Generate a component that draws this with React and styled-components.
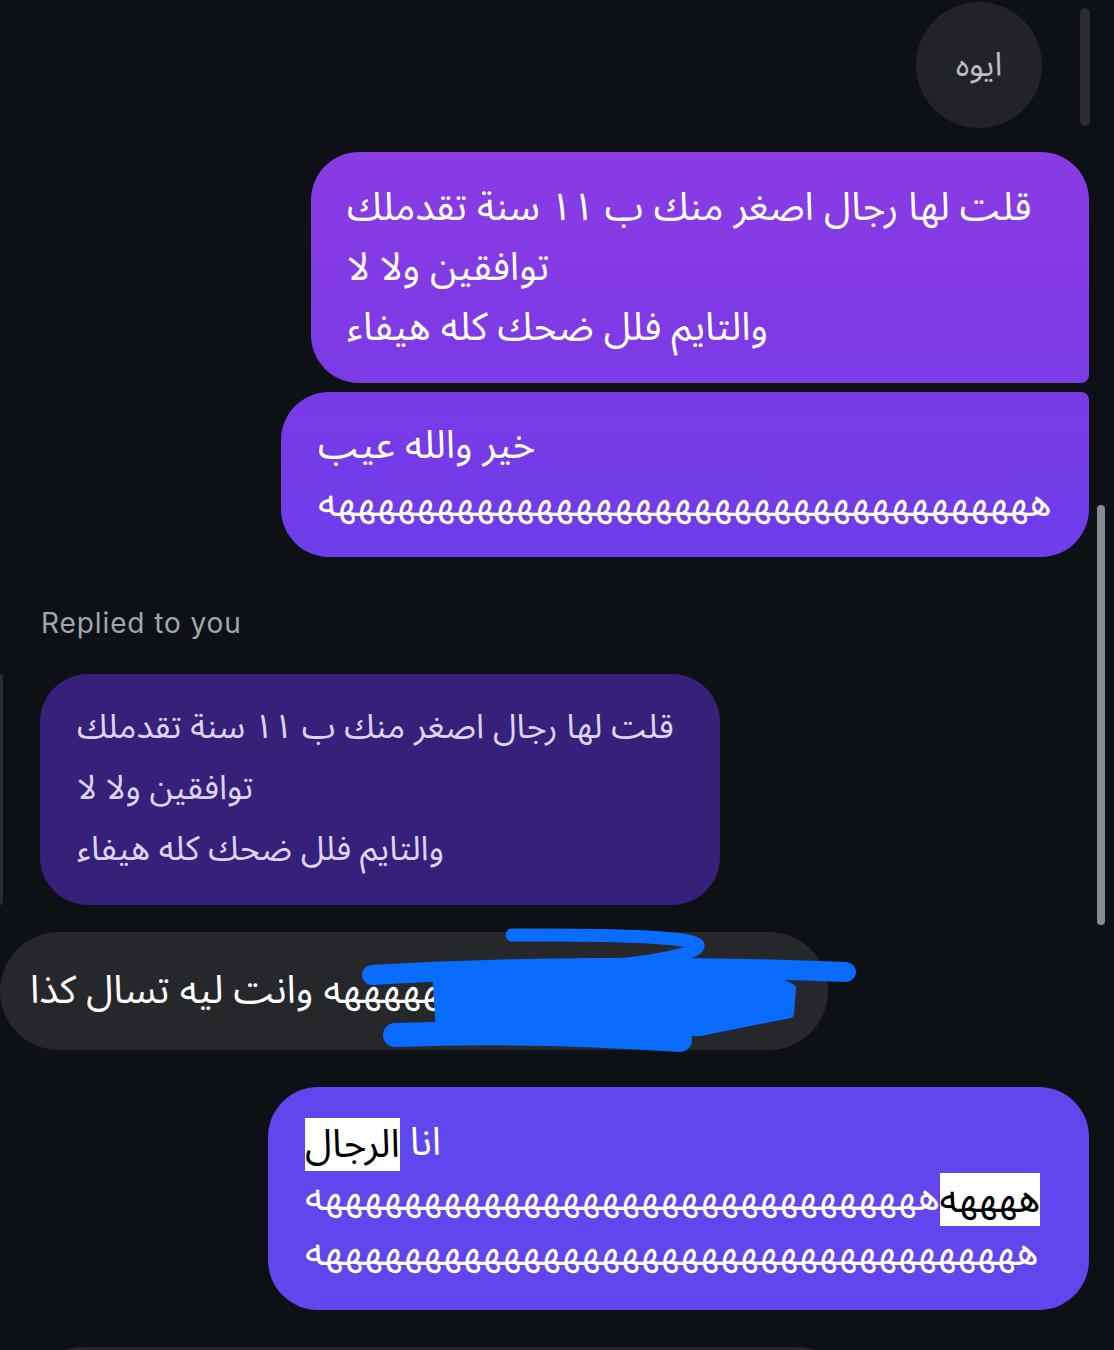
import React from "react";
import styled, { createGlobalStyle } from "styled-components";

const GlobalStyle = createGlobalStyle`
  body {
    margin: 0;
    background: #0d1014;
  }
`;

const arabic = `"Noto Sans Arabic", "DejaVu Sans", sans-serif`;

const Screen = styled.main`
  position: relative;
  width: 1114px;
  height: 1350px;
  overflow: hidden;
  background: #0d1014;
  display: flex;
  flex-direction: column;
  font-family: ${arabic};
`;

const Row = styled.div`
  position: relative;
  display: flex;
  justify-content: ${(p) => (p.$mine ? "flex-end" : "flex-start")};
  margin-top: ${(p) => p.$top || 0}px;
  padding-right: ${(p) => p.$right || 0}px;
  padding-left: ${(p) => p.$left || 0}px;
`;

const Reaction = styled.div`
  width: 126px;
  height: 126px;
  border-radius: 50%;
  background: #212327;
  color: #bcbcc0;
  font-size: 33px;
  display: flex;
  align-items: center;
  justify-content: center;
`;

const Bubble = styled.div`
  box-sizing: border-box;
  width: ${(p) => p.$width}px;
  padding: ${(p) => p.$pad};
  border-radius: ${(p) => p.$radius};
  background: ${(p) => p.$bg};
  color: #fff;
  font-size: ${(p) => p.$size || 39}px;
  line-height: ${(p) => p.$lh || 60}px;
  text-align: left;
  white-space: nowrap;
`;

const Line = styled.div`
  unicode-bidi: plaintext;
  text-align: left;
`;

const Mark = styled.span`
  display: inline-block;
  height: 53px;
  line-height: 53px;
  vertical-align: middle;
  background: #fff;
  color: #000;
`;

const Label = styled.div`
  margin-top: 51px;
  padding-left: 41px;
  font-family: Inter, "Liberation Sans", sans-serif;
  font-size: 28px;
  letter-spacing: 0.9px;
  line-height: 30px;
  color: #a2a6aa;
`;

const ReplyBar = styled.div`
  width: 3px;
  margin-right: 37px;
  border-radius: 0 3px 3px 0;
  background: #2a2c30;
`;

const ReplyBubble = styled(Bubble)`
  color: #ddd3f4;
`;

const GrayBubble = styled.div`
  box-sizing: border-box;
  width: ${(p) => p.$width}px;
  height: ${(p) => p.$height}px;
  border-radius: 59px;
  background: #25272b;
  color: #fff;
  font-size: 39px;
  line-height: 118px;
  padding: 0 38px 0 30px;
  white-space: nowrap;
  overflow: hidden;
  text-align: left;
`;

const Scribble = styled.svg`
  position: absolute;
  left: 0;
  top: -10px;
  overflow: visible;
  pointer-events: none;
`;

const ScrollThumb = styled.div`
  position: absolute;
  left: ${(p) => p.$x}px;
  top: ${(p) => p.$y}px;
  width: ${(p) => p.$w}px;
  height: ${(p) => p.$h}px;
  border-radius: 5px;
  background: ${(p) => p.$color};
`;

const ha = (n) => "ه".repeat(n);

export default function App() {
  return (
    <Screen>
      <GlobalStyle />

      <Row $mine $top={2} $right={72}>
        <Reaction>ايوه</Reaction>
      </Row>

      <Row $mine $top={24} $right={25}>
        <Bubble
          $width={778}
          $pad="26px 40px 25px 36px"
          $radius="48px 48px 8px 48px"
          $bg="linear-gradient(180deg, #8a3be3 0%, #7b3ae6 100%)"
          $lh={60}
        >
          <Line>قلت لها رجال اصغر منك ب ١١ سنة تقدملك</Line>
          <Line>توافقين ولا لا</Line>
          <Line>والتايم فلل ضحك كله هيفاء</Line>
        </Bubble>
      </Row>

      <Row $mine $top={9} $right={25}>
        <Bubble
          $width={808}
          $pad="25px 37px 24px 37px"
          $radius="48px 8px 48px 48px"
          $bg="linear-gradient(180deg, #793ae6 0%, #6e3dea 100%)"
          $lh={58}
        >
          <Line>خير والله عيب</Line>
          <Line>{ha(37)}</Line>
        </Bubble>
      </Row>

      <Label>Replied to you</Label>

      <Row $top={36}>
        <ReplyBar />
        <ReplyBubble
          $width={680}
          $pad="23px 40px 25px 37px"
          $radius="48px"
          $bg="#35207a"
          $size={34}
          $lh={61}
        >
          <Line>قلت لها رجال اصغر منك ب ١١ سنة تقدملك</Line>
          <Line>توافقين ولا لا</Line>
          <Line>والتايم فلل ضحك كله هيفاء</Line>
        </ReplyBubble>
      </Row>

      <Row $top={27}>
        <GrayBubble $width={828} $height={118}>
          {ha(14)} وانت ليه تسال كذا
        </GrayBubble>
        <Scribble width="870" height="140" viewBox="0 0 870 140">
          <g
            fill="none"
            stroke="#0a6cfe"
            strokeLinecap="round"
            strokeLinejoin="round"
          >
            <path d="M512 13 Q690 12 698 23 Q700 33 620 43" strokeWidth="13" />
            <path d="M372 53 Q600 40 846 50" strokeWidth="20" />
            <path d="M395 113 Q540 108 680 118" strokeWidth="24" />
          </g>
          <path
            d="M436 46 L760 50 L792 66 L790 92 L700 110 L440 110 Z"
            fill="#0a6cfe"
            stroke="#0a6cfe"
            strokeWidth="8"
            strokeLinejoin="round"
          />
        </Scribble>
      </Row>

      <Row $mine $top={37} $right={25}>
        <Bubble
          $width={821}
          $pad="29px 40px 30px 37px"
          $radius="50px"
          $bg="#6146ee"
          $lh={54}
        >
          <Line>
            انا <Mark>الرجال</Mark>
          </Line>
          <Line>
            <Mark>{ha(5)}</Mark>
            {ha(32)}
          </Line>
          <Line>{ha(37)}</Line>
        </Bubble>
      </Row>

      <Row $top={37} $left={24}>
        <GrayBubble $width={832} $height={118} />
      </Row>

      <ScrollThumb $x={1080} $y={8} $w={10} $h={118} $color="#2a2c30" />
      <ScrollThumb $x={1097} $y={505} $w={8} $h={420} $color="#898c8e" />
    </Screen>
  );
}
